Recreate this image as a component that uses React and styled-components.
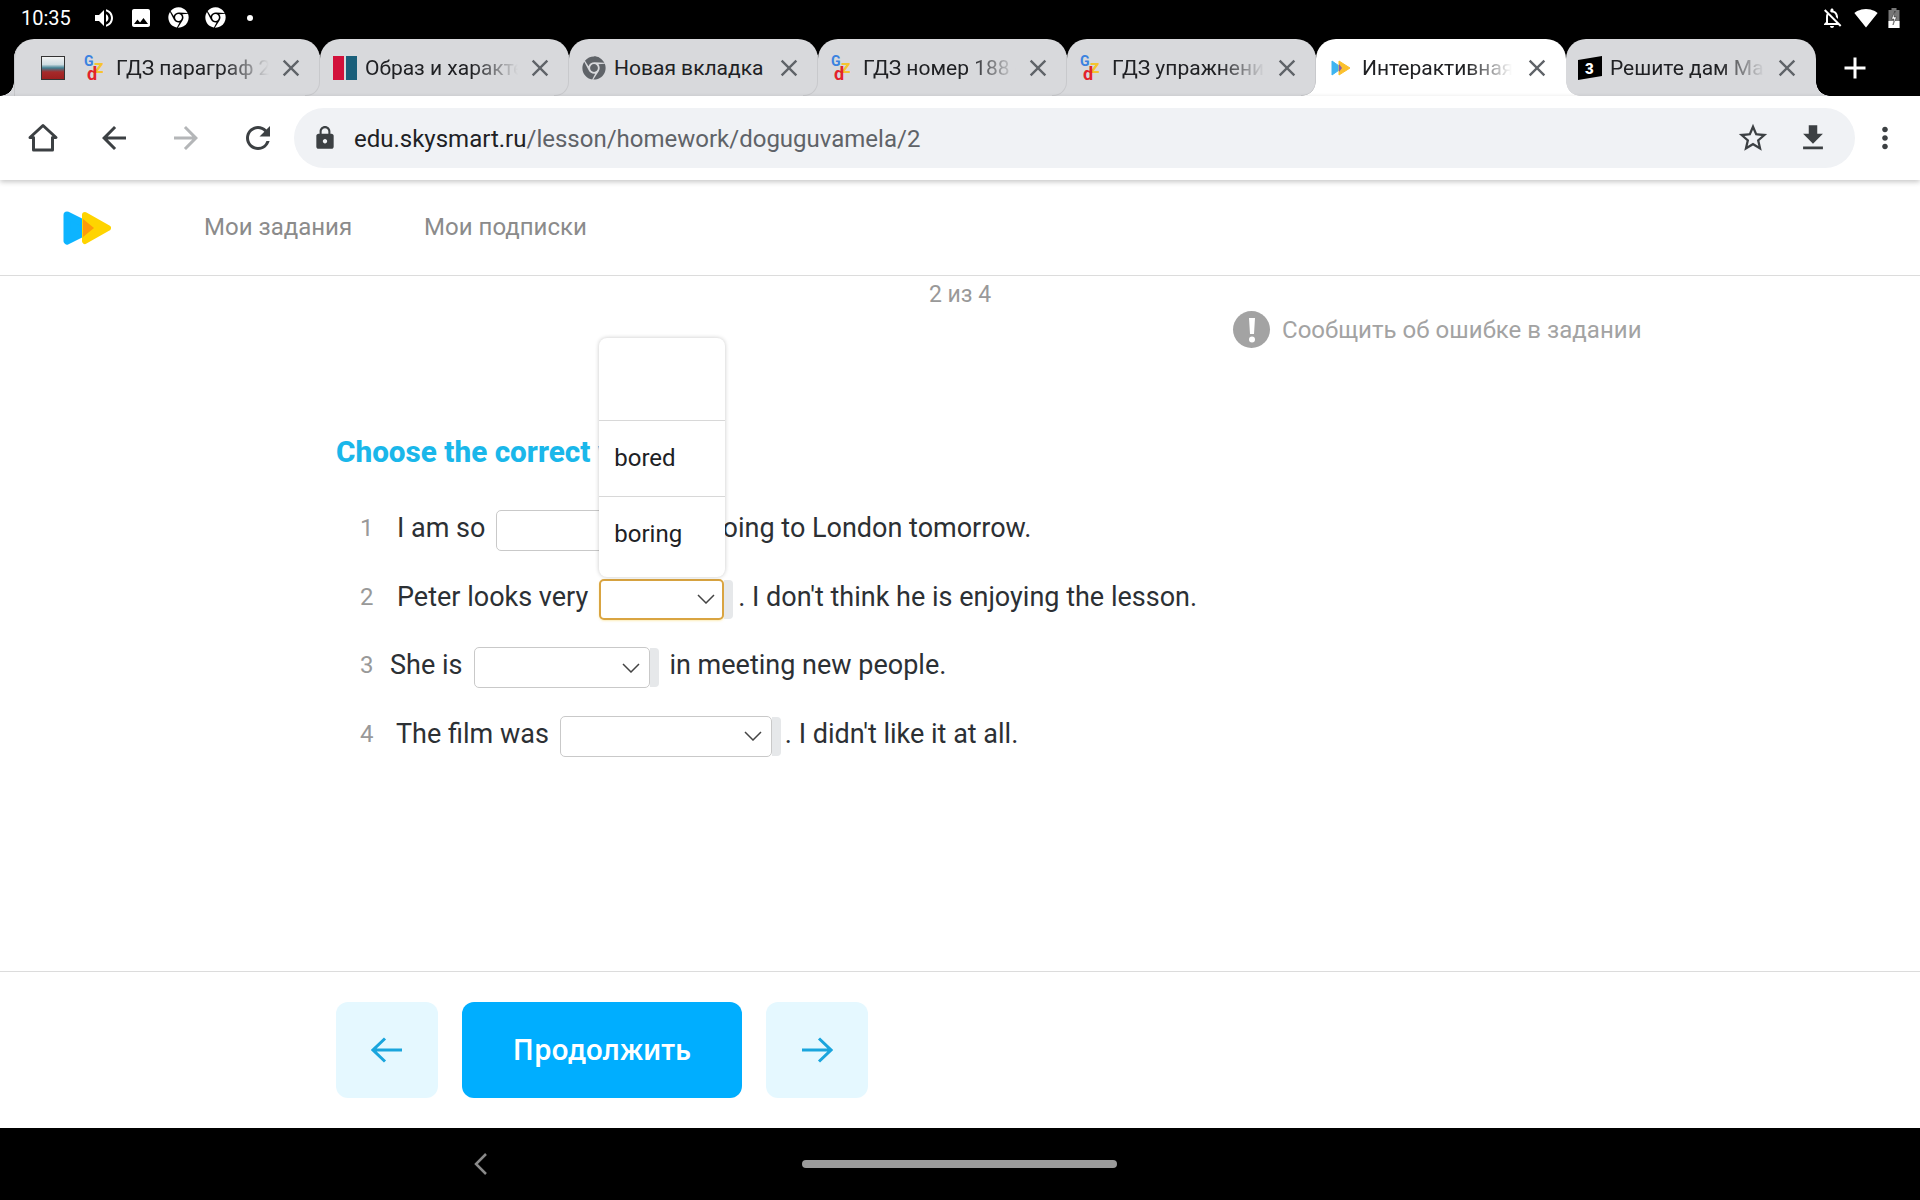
import React from 'react';
import styled, { createGlobalStyle, css } from 'styled-components';
import { FaChrome } from 'react-icons/fa';
import {
  MdVolumeUp, MdImage, MdOutlineNotificationsOff, MdSignalWifi4Bar, MdArrowBack, MdArrowForward,
  MdRefresh, MdLock, MdStarBorder, MdFileDownload, MdMoreVert, MdClose, MdAdd,
} from 'react-icons/md';

const GlobalStyle = createGlobalStyle`
  html, body { margin: 0; padding: 0; background: #fff; }
  body { font-family: Roboto, "Liberation Sans", sans-serif; }
`;

const Screen = styled.div`
  width: 1920px;
  height: 1200px;
  display: flex;
  flex-direction: column;
  overflow: hidden;
  background: #fff;
`;

const StatusBar = styled.div`
  height: 39px;
  box-sizing: border-box;
  padding: 0 20px 4px 21px;
  background: #000;
  color: #fff;
  display: flex;
  align-items: center;
  flex-shrink: 0;
`;

const Clock = styled.span`
  font-size: 20px;
  width: 71px;
`;

const StatusIcons = styled.div`
  display: flex;
  align-items: center;
  gap: ${p => p.$gap}px;
  margin-left: ${p => p.$left || 0};
`;

const Dot = styled.span`
  width: 6px;
  height: 6px;
  border-radius: 50%;
  background: #fff;
  margin-left: 8px;
`;

const TabStrip = styled.div`
  height: 57px;
  background: #000;
  display: flex;
  padding-left: 14px;
  flex-shrink: 0;
`;

const flare = (side, color) => css`
  content: '';
  position: absolute;
  bottom: 0;
  ${side}: -14px;
  width: 14px;
  height: 14px;
  background: radial-gradient(circle at ${side === 'left' ? '0 0' : '100% 0'}, transparent 13.5px, ${color} 14px);
`;

const StackTab = styled.div`
  position: relative;
  width: 57px;
  background: #d8d9dc;
  border-radius: 20px 0 0 0;
  display: flex;
  align-items: center;
  justify-content: flex-end;
  padding-right: 6px;
  box-sizing: border-box;
  box-shadow: inset 7px 0 0 -6px #c6c7ca, inset 14px 0 0 -13px #c6c7ca;
  &::before { ${flare('left', '#d8d9dc')} }
`;

const Flag = styled.span`
  width: 24px;
  height: 24px;
  box-sizing: border-box;
  border: 1px solid #333;
  background: linear-gradient(#f2f2f2 0, #cfdde2 34%, #3e7f92 50%, #a62a2a 68%, #9d1f1f 100%);
`;

const Tab = styled.div`
  position: relative;
  width: ${p => p.$width || 249}px;
  box-sizing: border-box;
  padding: 0 20px 0 ${p => p.$pad || 13}px;
  display: flex;
  align-items: center;
  gap: ${p => p.$gap || 8}px;
  background: ${p => (p.$active ? '#fff' : '#d8d9dc')};
  border-radius: 20px 20px 0 0;
  color: #202124;
  ${p => p.$flat && 'border-top-left-radius: 0;'}
  ${p => p.$active && css`
    z-index: 2;
    &::before { ${flare('left', '#fff')} }
    &::after { ${flare('right', '#fff')} }
  `}
  ${p => p.$last && css`
    &::after { ${flare('right', '#d8d9dc')} }
  `}
  ${p => !p.$active && !p.$last && css`
    &::after {
      content: '';
      position: absolute;
      right: 0;
      bottom: 0;
      width: 14px;
      height: 40px;
      border-right: 1px solid #c8c9cc;
      border-bottom: 1px solid #c8c9cc;
      border-bottom-right-radius: 14px;
    }
  `}
`;

const TabTitle = styled.span`
  width: 156px;
  font-size: 21px;
  white-space: nowrap;
  overflow: hidden;
  ${p => p.$fade && css`
    mask-image: linear-gradient(to right, #000 70%, transparent 100%);
  `}
`;

const CloseIcon = styled(MdClose)`
  flex-shrink: 0;
  color: #5f6368;
  margin: 0 -5px 0 auto;
`;

const NewTab = styled.div`
  width: 78px;
  display: flex;
  align-items: center;
  justify-content: center;
  color: #fff;
`;

const Toolbar = styled.div`
  position: relative;
  z-index: 3;
  height: 84px;
  flex-shrink: 0;
  background: #fff;
  display: flex;
  align-items: center;
  padding-left: 7px;
  box-shadow: 0 2px 5px rgba(0, 0, 0, 0.22);
`;

const ToolButton = styled.div`
  width: ${p => p.$width || 72}px;
  height: 60px;
  display: flex;
  align-items: center;
  justify-content: center;
  margin-left: ${p => p.$nudge || 0}px;
  margin-right: ${p => -(p.$nudge || 0)}px;
  color: ${p => (p.$disabled ? '#b4b6b8' : '#3c4043')};
`;

const UrlBar = styled.div`
  width: 1561px;
  height: 60px;
  margin-left: -1px;
  border-radius: 30px;
  background: #f0f2f5;
  display: flex;
  align-items: center;
  padding: 0 12px 0 18px;
  box-sizing: border-box;
  color: #3c4043;
`;

const UrlText = styled.div`
  flex: 1;
  margin-left: 16px;
  padding-top: 2px;
  font-size: 24px;
  color: #5f6368;
  b { font-weight: 400; color: #202124; }
`;

const UrlAction = styled.div`
  width: 60px;
  display: flex;
  justify-content: center;
`;

const Header = styled.header`
  height: 96px;
  flex-shrink: 0;
  box-sizing: border-box;
  border-bottom: 1px solid #dcdcdc;
  display: flex;
  align-items: center;
  padding: 0 0 0 63px;
`;

const NavLink = styled.span`
  font-size: 24px;
  color: #8b8b8b;
  margin: 0 0 2px ${p => p.$left}px;
`;

const Main = styled.main`
  flex: 1;
  display: flex;
  flex-direction: column;
`;

const Counter = styled.div`
  height: 38px;
  line-height: 38px;
  text-align: center;
  font-size: 23px;
  color: #999;
`;

const Report = styled.div`
  display: flex;
  align-items: center;
  gap: 12px;
  height: 37px;
  margin: -3px 0 0 1233px;
  font-size: 24px;
  letter-spacing: 0.03px;
  color: #a3a3a3;
`;

const ReportBadge = styled.span`
  width: 37px;
  height: 37px;
  border-radius: 50%;
  background: #a3a3a3;
  display: flex;
  align-items: center;
  justify-content: center;
  color: #fff;
`;

const Task = styled.section`
  padding-left: 336px;
`;

const Title = styled.h2`
  margin: 84px 0 22px;
  height: 40px;
  line-height: 40px;
  font-size: 29.7px;
  font-weight: 800;
  color: #1ab7ea;
  white-space: nowrap;
`;

const Row = styled.div`
  height: 68.5px;
  display: flex;
  align-items: center;
  padding-left: 24px;
  font-size: 27px;
  color: #2c3034;
`;

const Num = styled.span`
  width: 30px;
  font-size: 24px;
  color: #999;
`;

const Lead = styled.span`
  margin-left: ${p => p.$indent}px;
  white-space: nowrap;
`;

const SelectWrap = styled.span`
  position: relative;
  display: flex;
  margin: 5px ${p => p.$after}px 0 ${p => p.$before || 11}px;
`;

const SelectBox = styled.span`
  width: ${p => p.$width}px;
  height: 41px;
  box-sizing: border-box;
  background: #fff;
  border-radius: 5px;
  border: 1px solid #c9c9c9;
  display: flex;
  align-items: center;
  justify-content: flex-end;
  padding-right: 9px;
  ${p => p.$focused && css`
    border: 2px solid #d9a441;
    padding-right: 7px;
    box-shadow: 0 1px 2px rgba(250, 220, 120, 0.5);
  `}
`;

const SelectTail = styled.span`
  width: 9px;
  height: 39px;
  margin-top: 1px;
  background: #e6e8ea;
  border-radius: 0 4px 4px 0;
`;

const Dropdown = styled.div`
  position: absolute;
  left: 0;
  bottom: 43px;
  width: 126px;
  box-sizing: border-box;
  background: #fff;
  border-radius: 8px;
  box-shadow: 0 0 4px rgba(0, 0, 0, 0.22);
  z-index: 5;
  display: flex;
  flex-direction: column;
`;

const Option = styled.div`
  height: ${p => p.$height}px;
  box-sizing: border-box;
  padding-left: 15px;
  display: flex;
  align-items: center;
  font-size: 24px;
  color: #202124;
  & + & { border-top: 1px solid #d8d8d8; }
  &:last-child { padding-bottom: 6px; }
`;

const Footer = styled.footer`
  height: 157px;
  flex-shrink: 0;
  box-sizing: border-box;
  border-top: 1px solid #dcdcdc;
  display: flex;
  align-items: center;
  gap: 24px;
  padding-left: 336px;
`;

const ArrowButton = styled.div`
  width: 102px;
  height: 96px;
  border-radius: 12px;
  background: #e5f8ff;
  color: #1aa5dd;
  display: flex;
  align-items: center;
  justify-content: center;
`;

const PrimaryButton = styled.div`
  width: 280px;
  height: 96px;
  padding-bottom: 2px;
  box-sizing: border-box;
  border-radius: 12px;
  background: #00aeff;
  color: #fff;
  display: flex;
  align-items: center;
  justify-content: center;
  font-family: "Noto Sans", sans-serif;
  font-size: 28px;
  font-weight: 600;
`;

const NavBar = styled.div`
  height: 72px;
  flex-shrink: 0;
  background: #000;
  display: flex;
  align-items: center;
`;

const NavBack = styled.svg`
  margin-left: 472px;
`;

const Pill = styled.div`
  width: 315px;
  height: 8px;
  margin-left: 312px;
  border-radius: 4px;
  background: #9b9b9b;
`;

const GdzIcon = () => (
  <svg width="24" height="26" viewBox="0 0 24 26" style={{ flexShrink: 0 }} fontFamily="Roboto" fontWeight="700">
    <text x="0" y="11" fontSize="14" fill="#3b82e0">G</text>
    <text x="10" y="18" fontSize="19" fill="#f4c430">z</text>
    <text x="3" y="25" fontSize="18" fill="#e3222a">d</text>
  </svg>
);

const BookIcon = () => (
  <svg width="24" height="24" viewBox="0 0 24 24" style={{ flexShrink: 0 }}>
    <rect x="0" y="0" width="11" height="24" fill="#d2103a" />
    <rect x="13" y="0" width="11" height="24" fill="#1a5f7a" />
  </svg>
);

const ThreeIcon = () => (
  <svg width="24" height="24" viewBox="0 0 24 24" style={{ flexShrink: 0 }}>
    <polygon points="0,4 24,0 24,20 0,24" fill="#000" />
    <text x="7" y="18" fontSize="15" fontWeight="900" fontFamily="Roboto" fill="#fff">3</text>
  </svg>
);

const SmartIcon = () => (
  <svg width="20" height="16" viewBox="0 0 20 16" style={{ flexShrink: 0 }}>
    <path d="M1 1 L11 8 L1 15 Z" fill="#3eb4f0" stroke="#3eb4f0" strokeLinejoin="round" />
    <path d="M8 1 L19 8 L8 15 Z" fill="#fbc02d" stroke="#fbc02d" strokeLinejoin="round" />
    <path d="M8 4 L11 8 L8 12 Z" fill="#8e5aa8" />
  </svg>
);

const BatteryIcon = () => (
  <svg width="12" height="20" viewBox="0 0 12 20">
    <rect x="3.5" y="0" width="5" height="2" fill="#777" />
    <rect x="0.5" y="2" width="11" height="18" fill="#777" />
    <rect x="0.5" y="13" width="11" height="7" fill="#fff" />
    <path d="M7 3 L3.5 11 H6 L5 17 L8.5 9 H6 Z" fill="#fff" stroke="#000" strokeWidth="0.4" />
  </svg>
);

const HomeIcon = () => (
  <svg width="32" height="32" viewBox="0 0 32 32" fill="none" stroke="#3c4043" strokeWidth="3" strokeLinejoin="round">
    <path d="M16 3.5 L29 15.5 H25.5 V28 H6.5 V15.5 H3 Z" />
  </svg>
);

const Chevron = () => (
  <svg width="18" height="10" viewBox="0 0 18 10" fill="none" stroke="#444" strokeWidth="1.5">
    <path d="M1 1 L9 9 L17 1" />
  </svg>
);

const LongArrow = ({ flip }) => (
  <svg width="32" height="26" viewBox="0 0 32 26" fill="none" stroke="currentColor" strokeWidth="3"
    style={flip ? { transform: 'scaleX(-1)' } : undefined}>
    <path d="M31 13 H2 M14 1.5 L2 13 L14 24.5" />
  </svg>
);

const Logo = () => (
  <svg width="48" height="34" viewBox="0 0 48 34">
    <path d="M4 4 L30 17 L4 30 Z" fill="#0db4ff" stroke="#0db4ff" strokeWidth="7" strokeLinejoin="round" />
    <path d="M22 4 L45 17 L22 30 Z" fill="#ffd400" stroke="#ffd400" strokeWidth="6" strokeLinejoin="round" />
    <path d="M20 8 L31 17 L20 26 Z" fill="#ff9a0a" />
  </svg>
);

const Select = ({ width, before, after, focused, children }) => (
  <SelectWrap $before={before} $after={after}>
    <SelectBox $width={width} $focused={focused}><Chevron /></SelectBox>
    <SelectTail />
    {children}
  </SelectWrap>
);

const tabs = [
  { title: 'ГДЗ параграф 2', icon: <GdzIcon />, fade: true, flat: true },
  { title: 'Образ и характе', icon: <BookIcon />, fade: true },
  { title: 'Новая вкладка', icon: <FaChrome size={24} color="#5f6368" style={{ flexShrink: 0 }} /> },
  { title: 'ГДЗ номер 188 с', icon: <GdzIcon />, fade: true },
  { title: 'ГДЗ упражнени', icon: <GdzIcon />, fade: true },
  { title: 'Интерактивная', icon: <SmartIcon />, fade: true, active: true, pad: 15, gap: 11, width: 250 },
  { title: 'Решите дам Ма', icon: <ThreeIcon />, fade: true, last: true, pad: 12, width: 250 },
];

export default function App() {
  return (
    <Screen>
      <GlobalStyle />
      <StatusBar>
        <Clock>10:35</Clock>
        <StatusIcons $gap={13}>
          <MdVolumeUp size={24} />
          <MdImage size={24} />
          <FaChrome size={21} style={{ marginLeft: 2 }} />
          <FaChrome size={21} style={{ marginLeft: 3 }} />
          <Dot />
        </StatusIcons>
        <StatusIcons $gap={10} $left="auto">
          <MdOutlineNotificationsOff size={24} />
          <MdSignalWifi4Bar size={24} />
          <BatteryIcon />
        </StatusIcons>
      </StatusBar>

      <TabStrip>
        <StackTab><Flag /></StackTab>
        {tabs.map(tab => (
          <Tab key={tab.title} $active={tab.active} $last={tab.last} $flat={tab.flat} $pad={tab.pad} $gap={tab.gap} $width={tab.width}>
            {tab.icon}
            <TabTitle $fade={tab.fade}>{tab.title}</TabTitle>
            <CloseIcon size={28} />
          </Tab>
        ))}
        <NewTab><MdAdd size={36} /></NewTab>
      </TabStrip>

      <Toolbar>
        <ToolButton><HomeIcon /></ToolButton>
        <ToolButton $nudge={-1}><MdArrowBack size={36} /></ToolButton>
        <ToolButton $disabled $nudge={-1}><MdArrowForward size={36} /></ToolButton>
        <ToolButton $nudge={-1}><MdRefresh size={36} /></ToolButton>
        <UrlBar>
          <MdLock size={26} />
          <UrlText><b>edu.skysmart.ru</b>/lesson/homework/doguguvamela/2</UrlText>
          <UrlAction><MdStarBorder size={34} /></UrlAction>
          <UrlAction><MdFileDownload size={34} /></UrlAction>
        </UrlBar>
        <ToolButton $width={60}><MdMoreVert size={34} /></ToolButton>
      </Toolbar>

      <Header>
        <Logo />
        <NavLink $left={93}>Мои задания</NavLink>
        <NavLink $left={72}>Мои подписки</NavLink>
      </Header>

      <Main>
        <Counter>2 из 4</Counter>
        <Report>
          <ReportBadge>
            <svg width="8" height="26" viewBox="0 0 8 26" fill="#fff">
              <path d="M1 1 H7 L6 17 H2 Z" />
              <circle cx="4" cy="22.5" r="3" />
            </svg>
          </ReportBadge>
          Сообщить об ошибке в задании
        </Report>
        <Task>
          <Title>Choose the correct word.</Title>
          <Row>
            <Num>1</Num>
            <Lead $indent={7}>I am so</Lead>
            <Select width={191} after={11} />
            going to London tomorrow.
          </Row>
          <Row>
            <Num>2</Num>
            <Lead $indent={7}>Peter looks very</Lead>
            <Select width={125} after={5} focused>
              <Dropdown>
                <Option $height={82} />
                <Option $height={76}>bored</Option>
                <Option $height={81}>boring</Option>
              </Dropdown>
            </Select>
            . I don't think he is enjoying the lesson.
          </Row>
          <Row>
            <Num>3</Num>
            <Lead $indent={0}>She is</Lead>
            <Select width={176} before={12} after={10} />
            in meeting new people.
          </Row>
          <Row>
            <Num>4</Num>
            <Lead $indent={6}>The film was</Lead>
            <Select width={212} after={4} />
            . I didn't like it at all.
          </Row>
        </Task>
      </Main>

      <Footer>
        <ArrowButton><LongArrow /></ArrowButton>
        <PrimaryButton>Продолжить</PrimaryButton>
        <ArrowButton><LongArrow flip /></ArrowButton>
      </Footer>

      <NavBar>
        <NavBack width="18" height="24" viewBox="0 0 18 24" fill="none" stroke="#8a8a8a" strokeWidth="2.5">
          <path d="M14 2 L4 12 L14 22" />
        </NavBack>
        <Pill />
      </NavBar>
    </Screen>
  );
}
